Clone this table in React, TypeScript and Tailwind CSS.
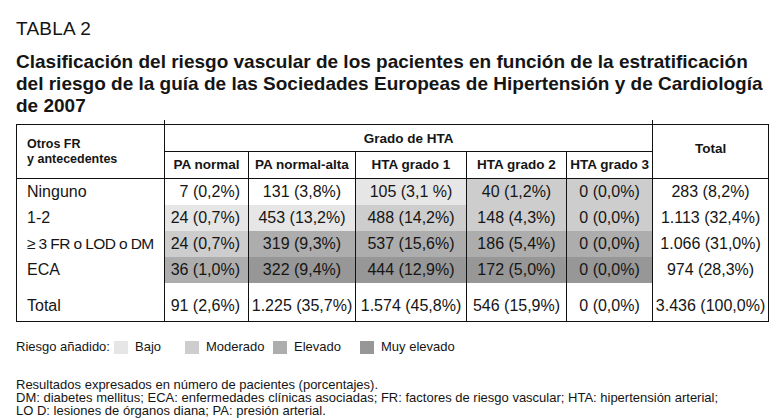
import React from "react";

type Risk = "none" | "bajo" | "mod" | "elev" | "muy";

const riskBg: Record<Risk, string> = {
  none: "bg-white",
  bajo: "bg-[#e6e6e6]",
  mod: "bg-[#cdcdcd]",
  elev: "bg-[#adadad]",
  muy: "bg-[#979797]",
};

const rows: { label: string; cells: string[]; risk: Risk[]; total: string; tight?: boolean }[] = [
  {
    label: "Ninguno",
    cells: ["7 (0,2%)", "131 (3,8%)", "105 (3,1 %)", "40 (1,2%)", "0 (0,0%)"],
    risk: ["none", "none", "bajo", "mod", "mod"],
    total: "283 (8,2%)",
  },
  {
    label: "1-2",
    cells: ["24 (0,7%)", "453 (13,2%)", "488 (14,2%)", "148 (4,3%)", "0 (0,0%)"],
    risk: ["bajo", "bajo", "mod", "mod", "mod"],
    total: "1.113 (32,4%)",
  },
  {
    label: "≥ 3 FR o LOD o DM",
    cells: ["24 (0,7%)", "319 (9,3%)", "537 (15,6%)", "186 (5,4%)", "0 (0,0%)"],
    risk: ["mod", "elev", "elev", "elev", "elev"],
    total: "1.066 (31,0%)",
    tight: true,
  },
  {
    label: "ECA",
    cells: ["36 (1,0%)", "322 (9,4%)", "444 (12,9%)", "172 (5,0%)", "0 (0,0%)"],
    risk: ["elev", "muy", "muy", "muy", "muy"],
    total: "974 (28,3%)",
  },
];

const totals = ["91 (2,6%)", "1.225 (35,7%)", "1.574 (45,8%)", "546 (15,9%)", "0 (0,0%)"];

const legend: { label: string; risk: Risk; width: string }[] = [
  { label: "Bajo", risk: "bajo", width: "w-[71px]" },
  { label: "Moderado", risk: "mod", width: "w-[88px]" },
  { label: "Elevado", risk: "elev", width: "w-[87px]" },
  { label: "Muy elevado", risk: "muy", width: "" },
];

// first data column is right aligned, the rest centred
const align = ["text-right pr-[8px]", "text-center", "text-center", "text-center", "text-center"];

export default function App() {
  return (
    <div className="w-[779px] h-[418px] bg-white px-[16px] pt-[18px] font-['Liberation_Sans',Arial,sans-serif] text-[#151515] overflow-hidden">
      <div className="text-[19px] leading-[22px] tracking-[0.2px]">TABLA 2</div>
      <h1 className="mt-[11px] text-[19px] leading-[22px] font-bold whitespace-nowrap">
        Clasificación del riesgo vascular de los pacientes en función de la estratificación
        <br />
        del riesgo de la guía de las Sociedades Europeas de Hipertensión y de Cardiología
        <br />
        de 2007
      </h1>

      <div className="relative mt-[7px] w-[752px]">
        {/* little ticks of the column rules that stick out above the table */}
        <span className="absolute left-[148px] -top-[4px] h-[4px] w-px bg-[#111]" />
        <span className="absolute left-[636px] -top-[4px] h-[4px] w-px bg-[#111]" />
        <table className="w-[752px] table-fixed border-collapse border border-[#111]">
          <colgroup>
            <col className="w-[148px]" />
            <col className="w-[84px]" />
            <col className="w-[107px]" />
            <col className="w-[111px]" />
            <col className="w-[100px]" />
            <col className="w-[86px]" />
            <col className="w-[116px]" />
          </colgroup>
          <thead>
            <tr className="h-[27px]">
              <th
                rowSpan={2}
                className="border-r border-b border-[#111] pl-[10px] text-left align-middle text-[12.5px] leading-[15px] font-bold"
              >
                Otros FR
                <br />y antecedentes
              </th>
              <th colSpan={5} className="border-r border-b border-[#111] text-center text-[13.5px] font-bold pt-[2px]">
                Grado de HTA
              </th>
              <th rowSpan={2} className="border-b border-[#111] text-center align-middle text-[13.5px] font-bold pb-[4px]">
                Total
              </th>
            </tr>
            <tr className="h-[27px]">
              {["PA normal", "PA normal-alta", "HTA grado 1", "HTA grado 2", "HTA grado 3"].map((h) => (
                <th key={h} className="border-r border-b border-[#111] text-center text-[13.5px] font-bold">
                  {h}
                </th>
              ))}
            </tr>
          </thead>
          <tbody className="text-[16px] leading-[18px]">
            {rows.map((r) => (
              <tr key={r.label} className="h-[26px]">
                <td
                  className={`border-r border-[#111] pl-[10px] whitespace-nowrap ${
                    r.tight ? "tracking-[-0.6px] text-[15.5px]" : ""
                  }`}
                >
                  {r.label}
                </td>
                {r.cells.map((c, i) => (
                  <td key={i} className={`border-r border-[#111] whitespace-nowrap ${align[i]} ${riskBg[r.risk[i]]}`}>
                    {c}
                  </td>
                ))}
                <td className="text-center whitespace-nowrap">{r.total}</td>
              </tr>
            ))}
            <tr className="h-[39px]">
              <td className="border-r border-[#111] pl-[10px] align-bottom pb-[6px]">Total</td>
              {totals.map((c, i) => (
                <td key={i} className={`border-r border-[#111] whitespace-nowrap align-bottom pb-[6px] ${align[i]}`}>
                  {c}
                </td>
              ))}
              <td className="text-center whitespace-nowrap align-bottom pb-[6px]">3.436 (100,0%)</td>
            </tr>
          </tbody>
        </table>
      </div>

      <div className="mt-[17px] flex items-center text-[13px] leading-[16px]">
        <span className="w-[98px]">Riesgo añadido:</span>
        {legend.map((l) => (
          <div key={l.label} className={`flex items-center gap-[7px] ${l.width}`}>
            <span className={`inline-block w-[14px] h-[13px] ${riskBg[l.risk]}`} />
            <span>{l.label}</span>
          </div>
        ))}
      </div>

      <div className="mt-[23px] text-[13px] leading-[13px]">
        <p>Resultados expresados en número de pacientes (porcentajes).</p>
        <p>
          DM: diabetes mellitus; ECA: enfermedades clínicas asociadas; FR: factores de riesgo vascular; HTA:
          hipertensión arterial;
        </p>
        <p>LO D: lesiones de órganos diana; PA: presión arterial.</p>
      </div>
    </div>
  );
}
